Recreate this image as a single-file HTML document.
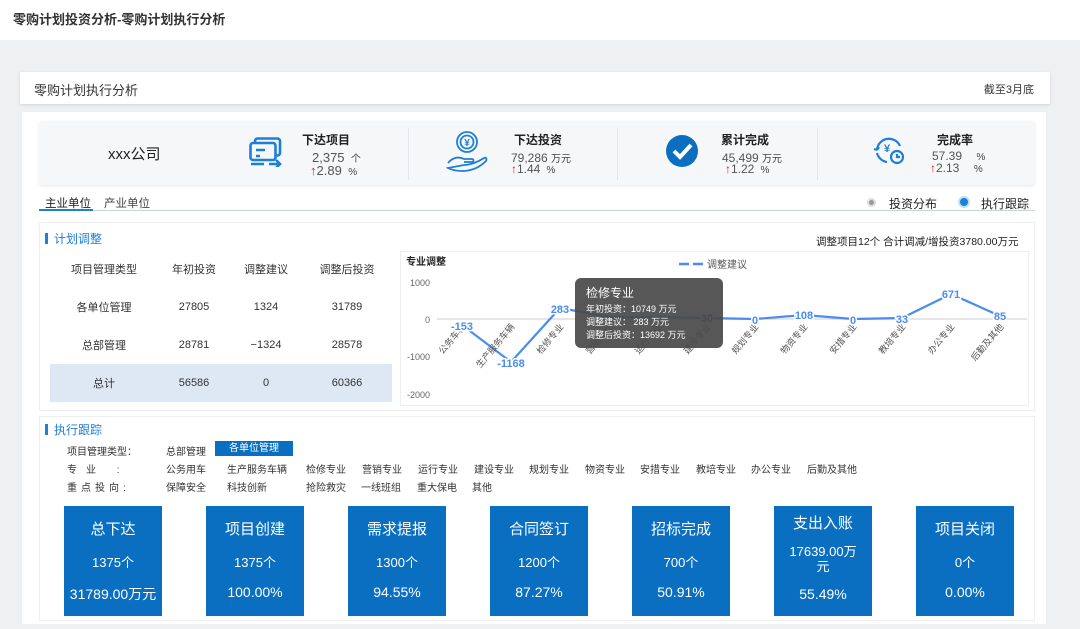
<!DOCTYPE html>
<html><head><meta charset="utf-8"><style>
*{margin:0;padding:0;box-sizing:border-box}
body{width:1080px;height:629px;overflow:hidden;background:#eff0f2;font-family:"Liberation Sans","Noto Sans CJK SC",sans-serif;color:#333;position:relative}
.a{position:absolute}
.hdr{left:0;top:0;width:1080px;height:40px;background:#fff;font-size:13px;font-weight:bold;color:#333;padding:9px 0 0 13px}
.tbar{left:20px;top:72px;width:1030px;height:32px;background:#fff;box-shadow:0 1px 3px rgba(0,0,0,.12)}
.panel{left:22px;top:112px;width:1024px;height:512px;background:#fff}
.kpi{left:39px;top:121px;width:996px;height:64px;background:#f6f7f9;border-radius:4px;box-shadow:0 1px 3px rgba(0,0,0,.1)}
.sep{width:1px;height:52px;background:#e3e6ea;top:128px}
.kt{font-size:12px;font-weight:bold;color:#222}
.kv{font-size:13px;color:#555}
.ku{font-size:10px;color:#444}
.up{color:#e02020}
.sec{font-size:12px;color:#1e7fd6}
.sec:before{content:"";display:inline-block;width:3px;height:11px;background:#1e7fd6;margin-right:6px;vertical-align:-1px}
.tb td{text-align:center;font-size:11px;color:#333;height:38px}
.card{width:98px;height:110px;background:#0a6fc1;color:#fff;text-align:center;top:506px}
.card .t{font-size:15px;margin-top:12px}
.card .n{font-size:13px;margin-top:13px}
.card .p{font-size:14px;margin-top:13px}
.fl{font-size:10px;color:#333}
</style></head><body>
<div class="a hdr">零购计划投资分析-零购计划执行分析</div>
<div class="a tbar"><span class="a" style="left:14px;top:8px;font-size:13px;color:#333">零购计划执行分析</span><span class="a" style="right:16px;top:9px;font-size:11px;color:#333">截至3月底</span></div>
<div class="a panel"></div>
<div class="a kpi"></div>
<div class="a" style="left:108px;top:143px;font-size:15px;color:#222">xxx公司</div>
<div class="a sep" style="left:408px"></div><div class="a sep" style="left:617px"></div><div class="a sep" style="left:817px"></div>
<svg class="a" style="left:249px;top:137px" width="34" height="30" viewBox="0 0 34 30" fill="none" stroke="#1e7fd6" stroke-width="2.6"><rect x="6" y="1.5" width="25" height="17" rx="2.5"/><rect x="1.5" y="6" width="25" height="17" rx="2.5" fill="#f6f7f9"/><path d="M7 13h9M7 19h4M2 27h13M20 27h11M27 23l4 4-4 4"/></svg>
<div class="a kt" style="left:302px;top:131px">下达项目</div>
<div class="a kv" style="left:312px;top:150px">2,375 <span class="ku">&nbsp;个</span></div>
<div class="a kv" style="left:310px;top:163px"><span class="up">↑</span>2.89 <span class="ku">&nbsp;%</span></div>
<svg class="a" style="left:446px;top:131px" width="42" height="44" viewBox="0 0 42 44" fill="none" stroke="#1e7fd6" stroke-width="1.8"><circle cx="21" cy="11" r="10"/><circle cx="21" cy="11" r="6.5"/><text x="21" y="15" font-size="10" fill="#1e7fd6" stroke="none" text-anchor="middle" font-weight="bold">¥</text><path d="M2 32c4-5 10-7 16-4h8c2 0 2 3 0 3h-8M18 34c6 0 14-3 20-7 2-1 3 1 2 3-6 6-14 10-24 10-5 0-10-1-14-3z"/></svg>
<div class="a kt" style="left:514px;top:131px">下达投资</div>
<div class="a kv" style="left:511px;top:150px;font-size:12px">79,286 <span class="ku">万元</span></div>
<div class="a kv" style="left:511px;top:162px;font-size:12px"><span class="up">↑</span>1.44 <span class="ku">&nbsp;%</span></div>
<svg class="a" style="left:665px;top:134px" width="34" height="34"><circle cx="17" cy="17" r="16" fill="#0a6fc1"/><path d="M9 17l6 6 11-12" stroke="#fff" stroke-width="4" fill="none"/></svg>
<div class="a kt" style="left:721px;top:131px">累计完成</div>
<div class="a kv" style="left:722px;top:150px;font-size:12px">45,499 <span class="ku">万元</span></div>
<div class="a kv" style="left:725px;top:162px;font-size:12px"><span class="up">↑</span>1.22 <span class="ku">&nbsp;%</span></div>
<svg class="a" style="left:873px;top:136px" width="32" height="30" viewBox="0 0 32 30" fill="none" stroke="#1e7fd6" stroke-width="2.2"><path d="M4 14a12 12 0 0 1 23-4M4 14l-3-1M4 14l2-3"/><path d="M14 26a12 12 0 0 1-10-9"/><text x="14" y="16" font-size="11" font-weight="bold" fill="#1e7fd6" stroke="none" text-anchor="middle">¥</text><circle cx="24" cy="21" r="6" fill="#f6f7f9"/><path d="M24 18v3h3"/></svg>
<div class="a kt" style="left:937px;top:131px">完成率</div>
<div class="a kv" style="left:932px;top:149px;font-size:12px">57.39 <span class="ku">&nbsp;&nbsp;&nbsp;&nbsp;%</span></div>
<div class="a kv" style="left:930px;top:161px;font-size:12px"><span class="up">↑</span>2.13 <span class="ku">&nbsp;&nbsp;&nbsp;&nbsp;%</span></div>
<div class="a" style="left:39px;top:210px;width:996px;height:1px;background:#ccd2da"></div>
<div class="a" style="left:39px;top:209px;width:54px;height:2px;background:#1e7fd6"></div>
<div class="a" style="left:45px;top:195px;font-size:11.5px;color:#222">主业单位</div>
<div class="a" style="left:104px;top:195px;font-size:11.5px;color:#444">产业单位</div>
<div class="a" style="left:867px;top:198px;width:9px;height:9px;border-radius:50%;background:#999;border:2px solid #ddd"></div>
<div class="a" style="left:889px;top:195px;font-size:12px;color:#222">投资分布</div>
<div class="a" style="left:958px;top:196px;width:12px;height:12px;border-radius:50%;background:#1e7fd6;border:2.5px solid #bfe0fa;box-shadow:0 0 0 1px #1e7fd6 inset"></div>
<div class="a" style="left:981px;top:195px;font-size:12px;color:#222">执行跟踪</div>
<div class="a" style="left:39px;top:222px;width:996px;height:189px;border:1px solid #eceef1"></div>
<div class="a sec" style="left:45px;top:230px">计划调整</div>
<div class="a" style="left:816px;top:234px;font-size:10.5px;color:#222">调整项目12个 合计调减/增投资3780.00万元</div>
<table class="a tb" style="left:50px;top:250px;width:342px;border-collapse:collapse">
<tr><td>项目管理类型</td><td>年初投资</td><td>调整建议</td><td>调整后投资</td></tr>
<tr><td>各单位管理</td><td>27805</td><td>1324</td><td>31789</td></tr>
<tr><td>总部管理</td><td>28781</td><td>−1324</td><td>28578</td></tr>
<tr style="background:#dde8f4"><td>总计</td><td>56586</td><td>0</td><td>60366</td></tr>
</table>
<svg class="a" style="left:400px;top:251px" width="629" height="155" font-family="Liberation Sans,Noto Sans CJK SC,sans-serif">
<rect x="0.5" y="0.5" width="628" height="154" fill="#fff" stroke="#eee"/>
<text x="6" y="14" font-size="10" font-weight="bold" fill="#222">专业调整</text>
<path d="M279 13h10M293 13h10" stroke="#4a8cf0" stroke-width="2.5"/><text x="307" y="17" font-size="10" fill="#555">调整建议</text>
<g font-size="9" fill="#666" text-anchor="end"><text x="30" y="35">1000</text><text x="30" y="72">0</text><text x="30" y="109">-1000</text><text x="30" y="147">-2000</text></g>
<path d="M37 68h590" stroke="#ddd" stroke-width="1.5"/>
<polyline fill="none" stroke="#4a8cf0" stroke-width="2.2" points="62,74 111,111 160,57 209,66 258,66 307,67 355,68 404,64 453,68 502,67 551,43 600,65"/>
<g font-size="9" fill="#555" text-anchor="end">
<text transform="translate(66,76) rotate(-50)">公务车辆</text><text transform="translate(115,76) rotate(-50)">生产服务车辆</text><text transform="translate(164,76) rotate(-50)">检修专业</text><text transform="translate(213,76) rotate(-50)">营销专业</text><text transform="translate(262,76) rotate(-50)">运行专业</text><text transform="translate(311,76) rotate(-50)">建设专业</text><text transform="translate(359,76) rotate(-50)">规划专业</text><text transform="translate(408,76) rotate(-50)">物资专业</text><text transform="translate(457,76) rotate(-50)">安措专业</text><text transform="translate(506,76) rotate(-50)">教培专业</text><text transform="translate(555,76) rotate(-50)">办公专业</text><text transform="translate(604,76) rotate(-50)">后勤及其他</text>
</g>
<g font-size="11" font-weight="bold" fill="#4a8cf0" text-anchor="middle" stroke="#fff" stroke-width="3" paint-order="stroke">
<text x="62" y="79">-153</text><text x="111" y="116">-1168</text><text x="160" y="62">283</text><text x="307" y="71" fill="#1f3f7a">30</text><text x="355" y="73">0</text><text x="404" y="68">108</text><text x="453" y="73">0</text><text x="502" y="72">33</text><text x="551" y="47">671</text><text x="600" y="69">85</text>
</g>
<rect x="175" y="27" width="148" height="70" rx="6" fill="#4a4a4a" opacity=".93"/>
<text x="186" y="46" font-size="12" fill="#fff">检修专业</text>
<g font-size="9" fill="#fff"><text x="186" y="61">年初投资：10749 万元</text><text x="186" y="74">调整建议：   283 万元</text><text x="186" y="87">调整后投资：13692 万元</text></g>
</svg>
<div class="a" style="left:39px;top:416px;width:996px;height:205px;border:1px solid #eceef1"></div>
<div class="a sec" style="left:45px;top:421px">执行跟踪</div>
<div class="a fl" style="left:67px;top:443px">项目管理类型：</div>
<div class="a fl" style="left:166px;top:443px">总部管理</div>
<div class="a fl" style="left:215px;top:441px;width:78px;height:15px;background:#0a6fc1;color:#fff;text-align:center;line-height:15px">各单位管理</div>
<div class="a fl" style="left:67px;top:461px;letter-spacing:9px">专业 :</div>
<div class="a fl" style="left:166px;top:461px">公务用车</div><div class="a fl" style="left:227px;top:461px">生产服务车辆</div><div class="a fl" style="left:306px;top:461px">检修专业</div><div class="a fl" style="left:362px;top:461px">营销专业</div><div class="a fl" style="left:418px;top:461px">运行专业</div><div class="a fl" style="left:474px;top:461px">建设专业</div><div class="a fl" style="left:529px;top:461px">规划专业</div><div class="a fl" style="left:585px;top:461px">物资专业</div><div class="a fl" style="left:640px;top:461px">安措专业</div><div class="a fl" style="left:696px;top:461px">教培专业</div><div class="a fl" style="left:751px;top:461px">办公专业</div><div class="a fl" style="left:807px;top:461px">后勤及其他</div>
<div class="a fl" style="left:67px;top:479px;letter-spacing:4px">重点投向:</div>
<div class="a fl" style="left:166px;top:479px">保障安全</div><div class="a fl" style="left:227px;top:479px">科技创新</div><div class="a fl" style="left:306px;top:479px">抢险救灾</div><div class="a fl" style="left:361px;top:479px">一线班组</div><div class="a fl" style="left:417px;top:479px">重大保电</div><div class="a fl" style="left:472px;top:479px">其他</div>
<div class="a card" style="left:64px"><div class="t">总下达</div><div class="n">1375个</div><div class="p">31789.00万元</div></div>
<div class="a card" style="left:206px"><div class="t">项目创建</div><div class="n">1375个</div><div class="p">100.00%</div></div>
<div class="a card" style="left:348px"><div class="t">需求提报</div><div class="n">1300个</div><div class="p">94.55%</div></div>
<div class="a card" style="left:490px"><div class="t">合同签订</div><div class="n">1200个</div><div class="p">87.27%</div></div>
<div class="a card" style="left:632px"><div class="t">招标完成</div><div class="n">700个</div><div class="p">50.91%</div></div>
<div class="a card" style="left:774px"><div class="t" style="margin-top:6px">支出入账</div><div class="n" style="margin-top:11px;line-height:15px">17639.00万<br>元</div><div class="p" style="margin-top:12px">55.49%</div></div>
<div class="a card" style="left:916px"><div class="t">项目关闭</div><div class="n">0个</div><div class="p">0.00%</div></div>
</body></html>
